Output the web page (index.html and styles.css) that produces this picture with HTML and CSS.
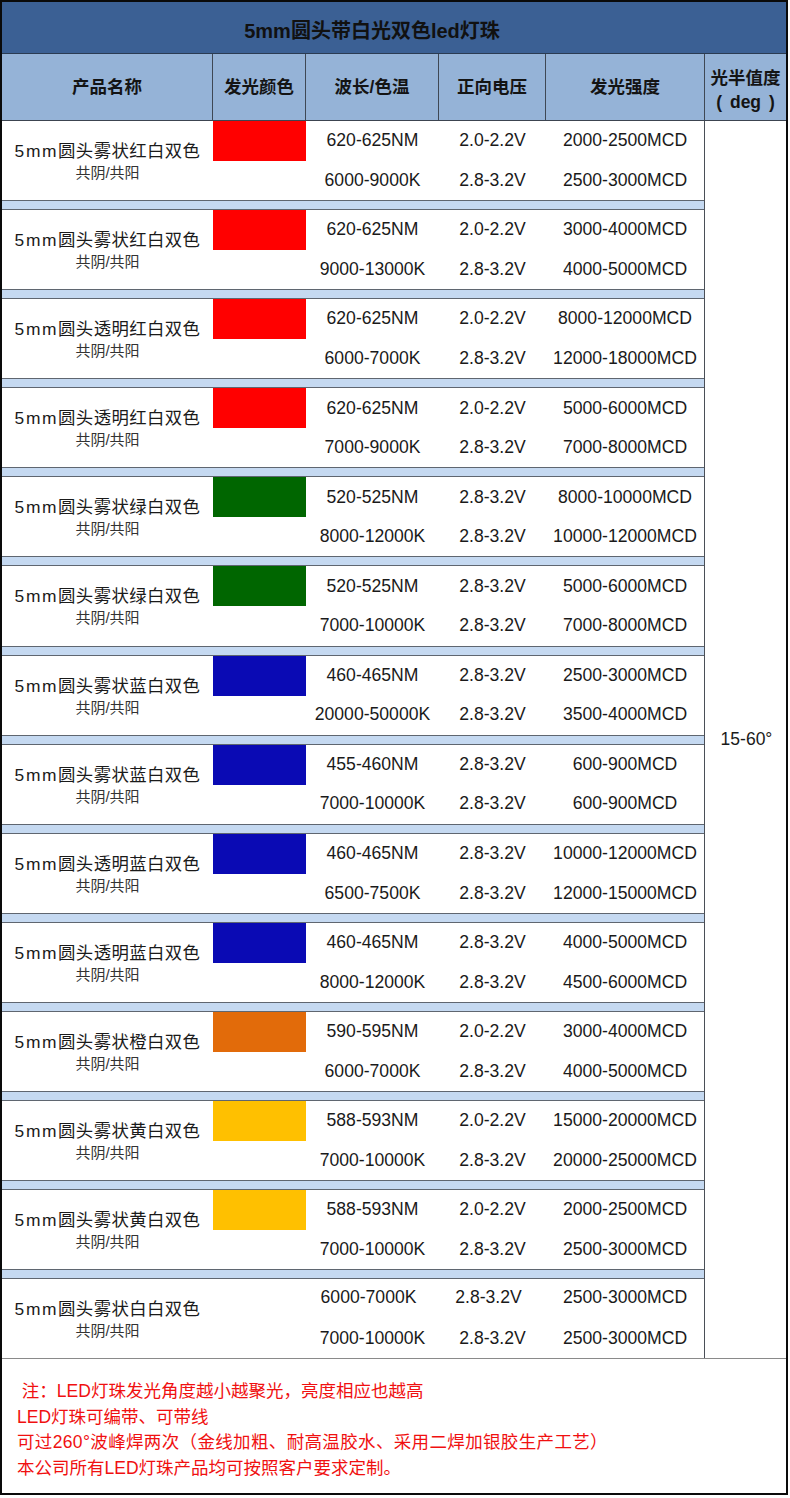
FILE: index.html
```html
<!DOCTYPE html>
<html lang="zh-CN">
<head>
<meta charset="utf-8">
<title>5mm圆头带白光双色led灯珠</title>
<link rel="stylesheet" href="styles.css">
</head>
<body>
<div class="sheet">
  <div class="title">5mm圆头带白光双色led灯珠</div>
  <div class="head">
    <div class="hc">产品名称</div>
    <div class="hc">发光颜色</div>
    <div class="hc">波长/色温</div>
    <div class="hc">正向电压</div>
    <div class="hc">发光强度</div>
    <div class="hc hc-last"><span>光半值度</span><span class="deg">( deg )</span></div>
  </div>
  <div class="body">
    <div class="rows">
      <div class="row">
        <div class="name"><span class="n1"><span class="lat">5mm</span>圆头雾状红白双色</span><span class="n2">共阴/共阳</span></div>
        <div class="swcell"><div class="sw red"></div></div>
        <div class="dc"><span>620-625NM</span><span>6000-9000K</span></div>
        <div class="dc"><span>2.0-2.2V</span><span>2.8-3.2V</span></div>
        <div class="dc"><span>2000-2500MCD</span><span>2500-3000MCD</span></div>
      </div>
      <div class="band"></div>
      <div class="row">
        <div class="name"><span class="n1"><span class="lat">5mm</span>圆头雾状红白双色</span><span class="n2">共阴/共阳</span></div>
        <div class="swcell"><div class="sw red"></div></div>
        <div class="dc"><span>620-625NM</span><span>9000-13000K</span></div>
        <div class="dc"><span>2.0-2.2V</span><span>2.8-3.2V</span></div>
        <div class="dc"><span>3000-4000MCD</span><span>4000-5000MCD</span></div>
      </div>
      <div class="band"></div>
      <div class="row">
        <div class="name"><span class="n1"><span class="lat">5mm</span>圆头透明红白双色</span><span class="n2">共阴/共阳</span></div>
        <div class="swcell"><div class="sw red"></div></div>
        <div class="dc"><span>620-625NM</span><span>6000-7000K</span></div>
        <div class="dc"><span>2.0-2.2V</span><span>2.8-3.2V</span></div>
        <div class="dc"><span>8000-12000MCD</span><span>12000-18000MCD</span></div>
      </div>
      <div class="band"></div>
      <div class="row">
        <div class="name"><span class="n1"><span class="lat">5mm</span>圆头透明红白双色</span><span class="n2">共阴/共阳</span></div>
        <div class="swcell"><div class="sw red"></div></div>
        <div class="dc"><span>620-625NM</span><span>7000-9000K</span></div>
        <div class="dc"><span>2.0-2.2V</span><span>2.8-3.2V</span></div>
        <div class="dc"><span>5000-6000MCD</span><span>7000-8000MCD</span></div>
      </div>
      <div class="band"></div>
      <div class="row">
        <div class="name"><span class="n1"><span class="lat">5mm</span>圆头雾状绿白双色</span><span class="n2">共阴/共阳</span></div>
        <div class="swcell"><div class="sw green"></div></div>
        <div class="dc"><span>520-525NM</span><span>8000-12000K</span></div>
        <div class="dc"><span>2.8-3.2V</span><span>2.8-3.2V</span></div>
        <div class="dc"><span>8000-10000MCD</span><span>10000-12000MCD</span></div>
      </div>
      <div class="band"></div>
      <div class="row">
        <div class="name"><span class="n1"><span class="lat">5mm</span>圆头雾状绿白双色</span><span class="n2">共阴/共阳</span></div>
        <div class="swcell"><div class="sw green"></div></div>
        <div class="dc"><span>520-525NM</span><span>7000-10000K</span></div>
        <div class="dc"><span>2.8-3.2V</span><span>2.8-3.2V</span></div>
        <div class="dc"><span>5000-6000MCD</span><span>7000-8000MCD</span></div>
      </div>
      <div class="band"></div>
      <div class="row">
        <div class="name"><span class="n1"><span class="lat">5mm</span>圆头雾状蓝白双色</span><span class="n2">共阴/共阳</span></div>
        <div class="swcell"><div class="sw blue"></div></div>
        <div class="dc"><span>460-465NM</span><span>20000-50000K</span></div>
        <div class="dc"><span>2.8-3.2V</span><span>2.8-3.2V</span></div>
        <div class="dc"><span>2500-3000MCD</span><span>3500-4000MCD</span></div>
      </div>
      <div class="band"></div>
      <div class="row">
        <div class="name"><span class="n1"><span class="lat">5mm</span>圆头雾状蓝白双色</span><span class="n2">共阴/共阳</span></div>
        <div class="swcell"><div class="sw blue"></div></div>
        <div class="dc"><span>455-460NM</span><span>7000-10000K</span></div>
        <div class="dc"><span>2.8-3.2V</span><span>2.8-3.2V</span></div>
        <div class="dc"><span>600-900MCD</span><span>600-900MCD</span></div>
      </div>
      <div class="band"></div>
      <div class="row">
        <div class="name"><span class="n1"><span class="lat">5mm</span>圆头透明蓝白双色</span><span class="n2">共阴/共阳</span></div>
        <div class="swcell"><div class="sw blue"></div></div>
        <div class="dc"><span>460-465NM</span><span>6500-7500K</span></div>
        <div class="dc"><span>2.8-3.2V</span><span>2.8-3.2V</span></div>
        <div class="dc"><span>10000-12000MCD</span><span>12000-15000MCD</span></div>
      </div>
      <div class="band"></div>
      <div class="row">
        <div class="name"><span class="n1"><span class="lat">5mm</span>圆头透明蓝白双色</span><span class="n2">共阴/共阳</span></div>
        <div class="swcell"><div class="sw blue"></div></div>
        <div class="dc"><span>460-465NM</span><span>8000-12000K</span></div>
        <div class="dc"><span>2.8-3.2V</span><span>2.8-3.2V</span></div>
        <div class="dc"><span>4000-5000MCD</span><span>4500-6000MCD</span></div>
      </div>
      <div class="band"></div>
      <div class="row">
        <div class="name"><span class="n1"><span class="lat">5mm</span>圆头雾状橙白双色</span><span class="n2">共阴/共阳</span></div>
        <div class="swcell"><div class="sw orange"></div></div>
        <div class="dc"><span>590-595NM</span><span>6000-7000K</span></div>
        <div class="dc"><span>2.0-2.2V</span><span>2.8-3.2V</span></div>
        <div class="dc"><span>3000-4000MCD</span><span>4000-5000MCD</span></div>
      </div>
      <div class="band"></div>
      <div class="row">
        <div class="name"><span class="n1"><span class="lat">5mm</span>圆头雾状黄白双色</span><span class="n2">共阴/共阳</span></div>
        <div class="swcell"><div class="sw yellow"></div></div>
        <div class="dc"><span>588-593NM</span><span>7000-10000K</span></div>
        <div class="dc"><span>2.0-2.2V</span><span>2.8-3.2V</span></div>
        <div class="dc"><span>15000-20000MCD</span><span>20000-25000MCD</span></div>
      </div>
      <div class="band"></div>
      <div class="row">
        <div class="name"><span class="n1"><span class="lat">5mm</span>圆头雾状黄白双色</span><span class="n2">共阴/共阳</span></div>
        <div class="swcell"><div class="sw yellow"></div></div>
        <div class="dc"><span>588-593NM</span><span>7000-10000K</span></div>
        <div class="dc"><span>2.0-2.2V</span><span>2.8-3.2V</span></div>
        <div class="dc"><span>2000-2500MCD</span><span>2500-3000MCD</span></div>
      </div>
      <div class="band"></div>
      <div class="row">
        <div class="name"><span class="n1"><span class="lat">5mm</span>圆头雾状白白双色</span><span class="n2">共阴/共阳</span></div>
        <div class="swcell"></div>
        <div class="dc dc-up"><span class="shl">6000-7000K</span><span>7000-10000K</span></div>
        <div class="dc dc-up"><span class="shl">2.8-3.2V</span><span>2.8-3.2V</span></div>
        <div class="dc dc-up"><span>2500-3000MCD</span><span>2500-3000MCD</span></div>
      </div>
    </div>
    <div class="angle">15-60°</div>
  </div>
  <div class="notes">
    <p>&nbsp;注：LED灯珠发光角度越小越聚光，亮度相应也越高</p>
    <p>LED灯珠可编带、可带线</p>
    <p class="wide">可过260°波峰焊两次（金线加粗、耐高温胶水、采用二焊加银胶生产工艺）</p>
    <p>本公司所有LED灯珠产品均可按照客户要求定制。</p>
  </div>
</div>
</body>
</html>
```

FILE: styles.css
```css
html, body {
  margin: 0;
  padding: 0;
  background: #ffffff;
}

body {
  font-family: "Liberation Sans", "Noto Sans CJK SC", sans-serif;
  color: #1a1a1a;
}

.sheet {
  width: 788px;
  height: 1495px;
  box-sizing: border-box;
  border: 2px solid #0a0a0a;
  display: flex;
  flex-direction: column;
}

.title {
  height: 52px;
  box-sizing: border-box;
  padding: 3px 44px 0 0;
  background: #3b6094;
  border-bottom: 1px solid #2a3b52;
  display: flex;
  align-items: center;
  justify-content: center;
  font-size: 20px;
  font-weight: 700;
  color: #111111;
}

.head {
  height: 67px;
  box-sizing: border-box;
  display: grid;
  grid-template-columns: 211px 93px 133px 107px 159px 1fr;
  background: #95b3d7;
  border-bottom: 1px solid #3c4450;
}

.hc {
  display: flex;
  flex-direction: column;
  align-items: center;
  justify-content: center;
  border-right: 1px solid #3f4854;
  font-size: 17.5px;
  font-weight: 700;
  color: #141414;
  line-height: 24px;
}

.hc-last {
  border-right: none;
  padding-top: 6px;
}

.deg {
  word-spacing: 3px;
}

.body {
  display: flex;
  flex: none;
}

.rows {
  width: 702px;
  display: flex;
  flex-direction: column;
}

.row {
  height: 79.1px;
  display: grid;
  grid-template-columns: 211px 93px 133px 107px 158px;
}

.band {
  height: 10px;
  box-sizing: border-box;
  background: #c5d9f1;
  border-top: 1px solid #5f6670;
  border-bottom: 1px solid #5f6670;
}

.name {
  display: flex;
  flex-direction: column;
  align-items: center;
  padding-top: 19px;
}

.n1 {
  font-size: 17.4px;
  letter-spacing: 0.4px;
  line-height: 22px;
  color: #1a1a1a;
}

.lat {
  letter-spacing: 1.6px;
}

.n2 {
  font-size: 15px;
  line-height: 22px;
  color: #333333;
}

.swcell {
  display: flex;
  flex-direction: column;
}

.sw {
  height: 40px;
}

.red { background: #ff0000; }
.green { background: #006600; }
.blue { background: #0a0ab4; }
.orange { background: #e26b0a; }
.yellow { background: #ffc000; }

.dc {
  display: flex;
  flex-direction: column;
  align-items: center;
  font-size: 17.6px;
  color: #1a1a1a;
}

.dc span {
  height: 39.5px;
  display: flex;
  align-items: center;
}

.dc-up span:first-child {
  padding-bottom: 2px;
  height: 37.5px;
}

.shl {
  margin-right: 8px;
}

.angle {
  flex: 1;
  border-left: 1px solid #4a4f57;
  display: flex;
  align-items: center;
  justify-content: center;
  font-size: 17.5px;
  color: #1a1a1a;
  padding-left: 2px;
}

.notes {
  flex: 1;
  border-top: 1px solid #8a8a8a;
  padding: 20px 0 0 15px;
  color: #f01010;
  font-size: 17.5px;
}

.notes p {
  margin: 0;
  line-height: 25.4px;
}

.notes .wide {
  letter-spacing: 0.35px;
}
```
